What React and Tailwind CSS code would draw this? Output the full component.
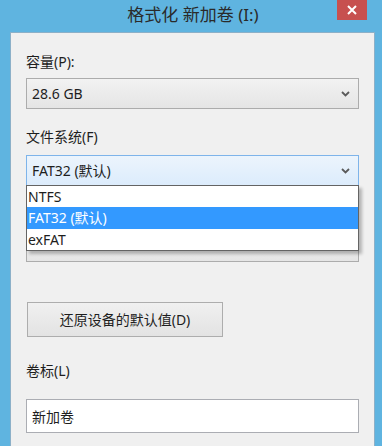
import React from "react";

const font = { fontFamily: '"Noto Sans", "Noto Sans CJK SC", sans-serif' };

function Chevron() {
  return (
    <svg width="9" height="6" viewBox="0 0 9 6" className="shrink-0">
      <path d="M1 1 L4.5 4.5 L8 1" fill="none" stroke="#5a5a5a" strokeWidth="1.8" />
    </svg>
  );
}

function Combo({ text, active }) {
  return (
    <div
      className={
        "h-[31px] flex items-center justify-between pl-[5px] pr-[8px] border text-[14px] text-[#1e1e1e] " +
        (active
          ? "border-[#7eb4ea] bg-gradient-to-b from-[#ecf4fc] to-[#dcecfc]"
          : "border-[#acacac] bg-gradient-to-b from-[#f2f2f2] to-[#e5e5e5]")
      }
    >
      <span>{text}</span>
      <Chevron />
    </div>
  );
}

export default function App() {
  return (
    <div className="w-[382px] h-[446px] bg-[#5fb4e0] flex flex-col overflow-hidden" style={font}>
      <div className="relative h-[32px] shrink-0 flex items-center justify-center">
        <span className="text-[17px] text-[#2a2a2a] -mt-[2px] ml-[4px]">格式化 新加卷 (I:)</span>
        <div className="absolute right-[15px] top-0 w-[30px] h-[20px] bg-[#c7504f] flex items-center justify-center">
          <svg width="10" height="10" viewBox="0 0 10 10">
            <path d="M1 1 L9 9 M9 1 L1 9" stroke="#fff" strokeWidth="2" />
          </svg>
        </div>
      </div>
      <div className="ml-[10px] mr-[7px] flex-1 bg-[#f0f0f0] border-l border-t border-r border-[#8cb0c8] px-[15px] pt-[19px] flex flex-col text-[14px] text-[#1e1e1e]">
        <div className="h-[20px] leading-[20px]">容量(P):</div>
        <div className="mt-[6px]">
          <Combo text="28.6 GB" />
        </div>
        <div className="mt-[18px] h-[20px] leading-[20px]">文件系统(F)</div>
        <div className="mt-[8px] relative">
          <Combo text="FAT32 (默认)" active />
          <div className="absolute left-0 right-0 top-[30px] z-10 bg-white border border-[#646464] shadow-[3px_3px_3px_rgba(0,0,0,0.25)] flex flex-col">
            <div className="h-[21px] leading-[21px] pl-[1px]">NTFS</div>
            <div className="h-[22px] leading-[22px] pl-[1px] bg-[#3399ff] text-white">FAT32 (默认)</div>
            <div className="h-[21px] leading-[21px] pl-[1px]">exFAT</div>
          </div>
        </div>
        <div className="mt-[19px] h-[20px]" />
        <div className="mt-[6px] h-[31px] border border-[#acacac] bg-gradient-to-b from-[#f2f2f2] to-[#e5e5e5]" />
        <div className="mt-[40px] w-[196px] ml-[1px] h-[35px] border border-[#adadad] bg-gradient-to-b from-[#f0f0f0] to-[#e3e3e3] flex items-center justify-center text-[14px]">
          还原设备的默认值(D)
        </div>
        <div className="mt-[24px] h-[20px] leading-[20px]">卷标(L)</div>
        <div className="mt-[18px] h-[34px] border border-[#abadb3] bg-white flex items-center pl-[5px]">新加卷</div>
      </div>
    </div>
  );
}
